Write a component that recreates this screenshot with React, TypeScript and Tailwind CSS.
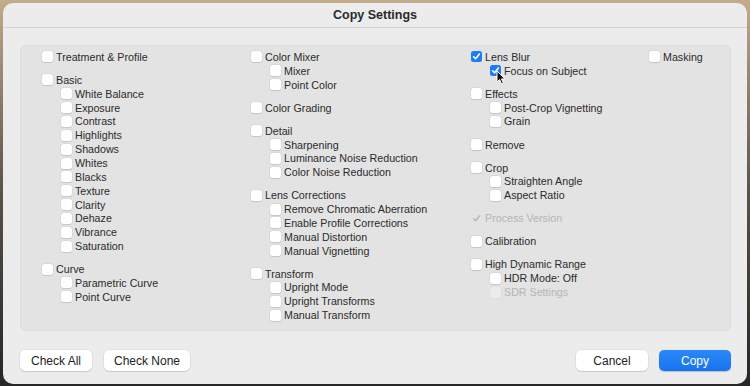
import React from 'react';

type Item = {
  label: string;
  checked?: boolean;
  disabled?: boolean;
  cursor?: boolean;
  children?: Item[];
};

const COLUMNS: Item[][] = [
  [
    { label: 'Treatment & Profile' },
    {
      label: 'Basic',
      children: [
        'White Balance', 'Exposure', 'Contrast', 'Highlights', 'Shadows', 'Whites',
        'Blacks', 'Texture', 'Clarity', 'Dehaze', 'Vibrance', 'Saturation',
      ].map(label => ({ label })),
    },
    { label: 'Curve', children: [{ label: 'Parametric Curve' }, { label: 'Point Curve' }] },
  ],
  [
    { label: 'Color Mixer', children: [{ label: 'Mixer' }, { label: 'Point Color' }] },
    { label: 'Color Grading' },
    {
      label: 'Detail',
      children: [{ label: 'Sharpening' }, { label: 'Luminance Noise Reduction' }, { label: 'Color Noise Reduction' }],
    },
    {
      label: 'Lens Corrections',
      children: [
        { label: 'Remove Chromatic Aberration' },
        { label: 'Enable Profile Corrections' },
        { label: 'Manual Distortion' },
        { label: 'Manual Vignetting' },
      ],
    },
    {
      label: 'Transform',
      children: [{ label: 'Upright Mode' }, { label: 'Upright Transforms' }, { label: 'Manual Transform' }],
    },
  ],
  [
    { label: 'Lens Blur', checked: true, children: [{ label: 'Focus on Subject', checked: true, cursor: true }] },
    { label: 'Effects', children: [{ label: 'Post-Crop Vignetting' }, { label: 'Grain' }] },
    { label: 'Remove' },
    { label: 'Crop', children: [{ label: 'Straighten Angle' }, { label: 'Aspect Ratio' }] },
    { label: 'Process Version', checked: true, disabled: true },
    { label: 'Calibration' },
    {
      label: 'High Dynamic Range',
      children: [{ label: 'HDR Mode: Off' }, { label: 'SDR Settings', disabled: true }],
    },
  ],
  [{ label: 'Masking' }],
];

function Checkbox({ item }: { item: Item }) {
  const { checked, disabled, cursor } = item;
  let box = 'bg-white shadow-[0_0_0_0.5px_rgba(0,0,0,0.07),0_0.5px_1px_rgba(0,0,0,0.1)]';
  if (checked && !disabled) box = 'bg-[#1f7cf4]';
  if (disabled && checked) box = 'bg-transparent';
  if (disabled && !checked) box = 'bg-[#ebebeb] shadow-[0_0_0_0.5px_rgba(0,0,0,0.04)]';
  return (
    <span className={`relative w-[11px] h-[11px] rounded-[2.5px] shrink-0 flex items-center justify-center ${box}`}>
      {checked && (
        <svg width="9" height="9" viewBox="0 0 9 9">
          <path
            d="M1.6 4.8 L3.6 6.8 L7.4 2"
            fill="none"
            stroke={disabled ? '#b9b9b9' : '#ffffff'}
            strokeWidth="1.6"
            strokeLinecap="round"
            strokeLinejoin="round"
          />
        </svg>
      )}
      {cursor && (
        <svg className="absolute left-[6px] top-[5px]" width="10" height="15" viewBox="0 0 10 15">
          <path d="M1 1 L1 12 L3.6 9.6 L5.6 14 L7.4 13.2 L5.5 8.9 L9 8.9 Z" fill="#111" stroke="#fff" strokeWidth="1" strokeLinejoin="round" />
        </svg>
      )}
    </span>
  );
}

function Row({ item, sub }: { item: Item; sub?: boolean }) {
  return (
    <div className={`h-[13.85px] flex items-center gap-[3px] ${sub ? 'pl-[19px]' : ''}`}>
      <Checkbox item={item} />
      <span className={`whitespace-nowrap ${item.disabled ? 'text-[#b5b5b5]' : 'text-[#2b2b2b]'}`}>{item.label}</span>
    </div>
  );
}

export default function App() {
  return (
    <div className="w-[750px] h-[386px] bg-gradient-to-b from-[#c3ab8c] via-[#5a5249] to-[#262626] pt-[3px] px-[3px] overflow-hidden" style={{ fontFamily: '"Liberation Sans", Arial, sans-serif' }}>
      <div className="h-[381px] bg-[#ececec] rounded-[10px] flex flex-col">
        {/* title bar */}
        <div className="h-[25px] shrink-0 flex items-center justify-center border-b border-[#d6d6d6] text-[12.5px] font-bold text-[#2a2a2a] pt-[1px]">
          Copy Settings
        </div>

        {/* settings panel */}
        <div className="mt-[17px] ml-[17px] mr-[16px] h-[286px] bg-[#e3e3e3] border border-[#dcdcdc] rounded-[6px] pl-[21px] pt-[4px] grid grid-cols-[209px_220px_178px_1fr] text-[10.7px]">
          {COLUMNS.map((col, ci) => (
            <div key={ci} className="flex flex-col gap-[9.2px]">
              {col.map((group, gi) => (
                <div key={gi}>
                  <Row item={group} />
                  {group.children?.map((child, i) => <Row key={i} item={child} sub />)}
                </div>
              ))}
            </div>
          ))}
        </div>

        {/* buttons */}
        <div className="mt-[19px] ml-[17px] mr-[16px] flex items-center text-[12px] text-[#222]">
          <button className="w-[72px] h-[21px] bg-white rounded-[5px] shadow-[0_0_0_0.5px_rgba(0,0,0,0.1),0_1px_1px_rgba(0,0,0,0.1)]">Check All</button>
          <button className="ml-[12px] w-[86px] h-[21px] bg-white rounded-[5px] shadow-[0_0_0_0.5px_rgba(0,0,0,0.1),0_1px_1px_rgba(0,0,0,0.1)]">Check None</button>
          <div className="flex-1" />
          <button className="w-[72px] h-[21px] bg-white rounded-[5px] shadow-[0_0_0_0.5px_rgba(0,0,0,0.1),0_1px_1px_rgba(0,0,0,0.1)]">Cancel</button>
          <button className="ml-[11px] w-[72px] h-[21px] bg-gradient-to-b from-[#2a88f8] to-[#1874ee] text-white rounded-[5px] shadow-[0_0.5px_1px_rgba(0,0,0,0.2)]">Copy</button>
        </div>
      </div>
    </div>
  );
}
